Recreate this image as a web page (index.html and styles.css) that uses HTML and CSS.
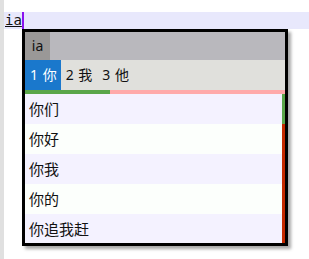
FILE: index.html
```html
<!DOCTYPE html>
<html lang="zh">
<head>
    <meta charset="UTF-8">
    <meta name="viewport" content="width=device-width, initial-scale=1.0">
    <title>输入法候选</title>
    <link rel="stylesheet" href="styles.css">
</head>
<body>
    <div class="editor">
        <div class="line">
            <span class="typed">ia</span><span class="caret"></span>
        </div>

        <div class="popup">
            <div class="preedit">
                <span class="code">ia</span>
            </div>

            <div class="candidates">
                <span class="cand active">1 你</span>
                <span class="cand">2 我</span>
                <span class="cand">3 他</span>
            </div>

            <div class="progress">
                <div class="progress-done"></div>
            </div>

            <div class="list-wrap">
                <ul class="list">
                    <li>你们</li>
                    <li>你好</li>
                    <li>你我</li>
                    <li>你的</li>
                    <li>你追我赶</li>
                </ul>
                <div class="scrollbar">
                    <div class="scroll-thumb"></div>
                </div>
            </div>
        </div>
    </div>
</body>
</html>
```

FILE: styles.css
```css
/* Page */
body {
    margin: 0;
    background: #fff;
    font-family: "Noto Sans", "Noto Sans CJK SC", sans-serif;
    color: #111;
}

.editor {
    border-left: 4px solid #e0e0e0;
    height: 259px;
    padding-top: 12px;
    box-sizing: border-box;
}

/* Text line with caret */
.line {
    height: 17px;
    background: #e8e8fc;
    display: flex;
    align-items: center;
    padding-left: 1px;
}

.typed {
    font-family: "DejaVu Sans Mono", monospace;
    font-size: 14px;
    line-height: 17px;
    text-decoration: underline;
}

.caret {
    width: 2px;
    height: 17px;
    background: #8a14f0;
    margin-left: 0;
}

/* Candidate popup */
.popup {
    margin-left: 18px;
    width: 260px;
    border: 3px solid #000;
    box-shadow: 3px 3px 3px rgba(0, 0, 0, 0.35);
    background: #fff;
}

.preedit {
    height: 28px;
    background: #b9b8bd;
    display: flex;
}

.code {
    width: 25px;
    background: #9a9897;
    font-size: 14px;
    line-height: 28px;
    text-align: center;
}

.candidates {
    height: 30px;
    background: #e0e0dc;
    display: flex;
    align-items: stretch;
    font-size: 14px;
    line-height: 30px;
    word-spacing: 1px;
}

.cand {
    padding: 0 5px;
}

.cand.active {
    background: #1a78cc;
    color: #fff;
    padding: 0 4px 0 5px;
}

.progress {
    height: 4px;
    background: #ffaaaa;
}

.progress-done {
    width: 85px;
    height: 4px;
    background: #5aa64a;
}

/* List */
.list-wrap {
    display: flex;
    height: 149px;
    overflow: hidden;
}

.list {
    flex: 1;
    margin: 0;
    padding: 0;
    list-style: none;
}

.list li {
    height: 30px;
    line-height: 30px;
    padding-left: 4px;
    font-size: 15px;
    background: #f4f2ff;
}

.list li:nth-child(even) {
    background: #fcfffc;
}

.scrollbar {
    width: 3px;
    background: #c42a00;
}

.scroll-thumb {
    height: 30px;
    background: #5aa64a;
}
```
